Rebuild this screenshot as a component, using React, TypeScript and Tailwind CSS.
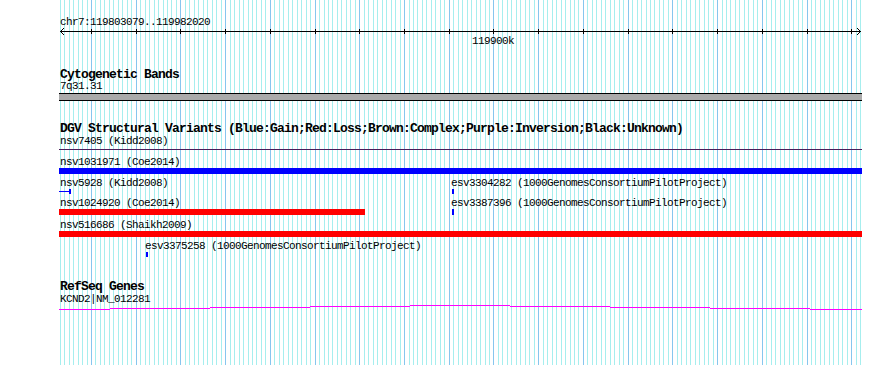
import React from 'react'

// 1 kb grid, major every 10 kb (k = 0 is 119803000)
const MINOR = 4.472
const gridX = (k: number) => Math.round(91 + (k - 7) * MINOR)

const GridLines = () => {
  const lines = []
  for (let k = 0; k <= 179; k++) {
    const x = gridX(k) + 0.5
    lines.push(
      <line key={k} x1={x} x2={x} y1={0} y2={365} stroke={k % 10 === 7 ? '#87c6ee' : '#a6eeee'} strokeWidth={1} />
    )
  }
  return (
    <svg className="absolute inset-0" width={890} height={365} shapeRendering="crispEdges">
      {lines}
    </svg>
  )
}

const Ruler = () => {
  const ticks = []
  for (let k = 7; k <= 179; k += 10) {
    const x = gridX(k) + 0.5
    ticks.push(<line key={k} x1={x} x2={x} y1={2} y2={7} stroke="#000" />)
  }
  return (
    <svg className="block" width={890} height={8}>
      <g shapeRendering="crispEdges">
        <line x1={60} x2={861} y1={4.5} y2={4.5} stroke="#000" />
        {ticks}
      </g>
      <polyline points="64,1 60.5,4.5 64,8" fill="none" stroke="#000" />
      <polyline points="857,1 860.5,4.5 857,8" fill="none" stroke="#000" />
    </svg>
  )
}

// gene model drawn as 100px steps, as in the source picture
const GENE_STEPS: [number, number, number][] = [
  [59, 110, 4], [110, 210, 3], [210, 310, 2], [310, 410, 1], [410, 510, 0],
  [510, 610, 1], [610, 710, 2], [710, 810, 3], [810, 862, 4],
]

const GeneLine = () => (
  <svg className="block" width={890} height={6} shapeRendering="crispEdges">
    {GENE_STEPS.map(([a, b, y]) => (
      <rect key={a} x={a} y={y} width={b - a} height={1} fill="#ff00ff" />
    ))}
  </svg>
)

const txt = "text-[11px] leading-[12px] tracking-[-0.6px] whitespace-pre"
const small = `${txt} pl-[60px]`
const bold = "text-[13px] leading-[11px] pt-[1px] tracking-[-0.8px] font-bold pl-[60px] whitespace-pre"

export default function App() {
  return (
    <div className="relative w-[890px] h-[365px] bg-white overflow-hidden text-black font-['Liberation_Mono',monospace]">
      <GridLines />
      <div className="relative">
        {/* ruler */}
        <div className={`${small} pt-[16px] h-[27px]`}>chr7:119803079..119982020</div>
        <Ruler />
        <div className={`${txt} h-[13px] pl-[472px]`}>119900k</div>

        {/* cytobands */}
        <div className={`${bold} mt-[20px] h-[12px]`}>Cytogenetic Bands</div>
        <div className={`${small} h-[13px]`}>7q31.31</div>
        <div className="ml-[59px] w-[803px] h-[8px] bg-[#aaaaaa] border-y border-black" />

        {/* DGV */}
        <div className={`${bold} mt-[21px] h-[13px]`}>
          DGV Structural Variants (Blue:Gain;Red:Loss;Brown:Complex;Purple:Inversion;Black:Unknown)
        </div>
        <div className={`${small} h-[13px]`}>nsv7405 (Kidd2008)</div>
        <div className="mt-[1px] ml-[59px] w-[803px] h-px bg-[#4a1d5a]" />

        <div className={`${small} mt-[6px] h-[12px]`}>nsv1031971 (Coe2014)</div>
        <div className="ml-[59px] w-[803px] h-[6px] bg-[#0000ff]" />

        <div className={`${small} mt-[3px] h-[12px] flex`}>
          <span className="w-[391px]">nsv5928 (Kidd2008)</span>
          <span>esv3304282 (1000GenomesConsortiumPilotProject)</span>
        </div>
        <div className="flex h-[5px]">
          <svg className="ml-[59px] block" width={12} height={5} shapeRendering="crispEdges">
            <rect x={0} y={2} width={12} height={1} fill="#0000ff" />
            <rect x={10} y={0} width={2} height={5} fill="#0000ff" />
          </svg>
          <div className="ml-[381px] w-[2px] h-[5px] bg-[#0000ff]" />
        </div>

        <div className={`${small} mt-[3px] h-[12px] flex`}>
          <span className="w-[391px]">nsv1024920 (Coe2014)</span>
          <span>esv3387396 (1000GenomesConsortiumPilotProject)</span>
        </div>
        <div className="flex h-[6px]">
          <div className="ml-[59px] w-[306px] h-[6px] bg-[#ff0000]" />
          <div className="ml-[87px] w-[2px] h-[6px] bg-[#0000ff]" />
        </div>

        <div className={`${small} mt-[4px] h-[12px]`}>nsv516686 (Shaikh2009)</div>
        <div className="ml-[59px] w-[803px] h-[6px] bg-[#ff0000]" />

        <div className={`${txt} mt-[3px] h-[12px] pl-[145px]`}>
          esv3375258 (1000GenomesConsortiumPilotProject)
        </div>
        <div className="ml-[146px] w-[2px] h-[5px] bg-[#0000ff]" />

        {/* RefSeq */}
        <div className={`${bold} mt-[23px] h-[12px]`}>RefSeq Genes</div>
        <div className={`${small} mt-[1px] h-[12px]`}>KCND2|NM_012281</div>
        <GeneLine />
      </div>
    </div>
  )
}
